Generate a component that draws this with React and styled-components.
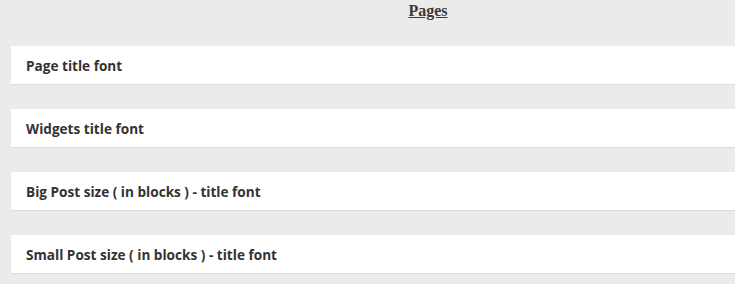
import React from 'react';
import styled, { createGlobalStyle } from 'styled-components';

const GlobalStyle = createGlobalStyle`
  html, body {
    margin: 0;
    padding: 0;
    background: #ebebeb;
    overflow: hidden;
  }
`;

const SECTIONS = [
  'Page title font',
  'Widgets title font',
  'Big Post size ( in blocks ) - title font',
  'Small Post size ( in blocks ) - title font',
];

const App = () => {
  return (
    <>
      <GlobalStyle />
      <Page>
        <Heading>Pages</Heading>
        <List>
          {SECTIONS.map((label) => (
            <Card key={label}>
              <CardTitle>{label}</CardTitle>
            </Card>
          ))}
        </List>
      </Page>
    </>
  );
};

const Page = styled.div`
  width: 834px;
  margin-left: 11px;
  padding-top: 1px;
`;

const Heading = styled.h2`
  margin: 0;
  text-align: center;
  font-family: 'Liberation Serif', 'Times New Roman', serif;
  font-size: 16px;
  font-weight: 700;
  line-height: 20px;
  color: #3a3a3a;
  text-decoration: underline;
`;

const List = styled.div`
  display: flex;
  flex-direction: column;
  gap: 24px;
  margin-top: 25px;
`;

const Card = styled.section`
  background: #fff;
  height: 38px;
  border-bottom: 1px solid #dcdcdc;
  display: flex;
  align-items: center;
  padding-left: 15px;
`;

const CardTitle = styled.h3`
  margin: 0;
  font-family: 'Open Sans', 'DejaVu Sans', sans-serif;
  font-size: 13.6px;
  font-weight: 700;
  color: #333;
`;

export default App;
